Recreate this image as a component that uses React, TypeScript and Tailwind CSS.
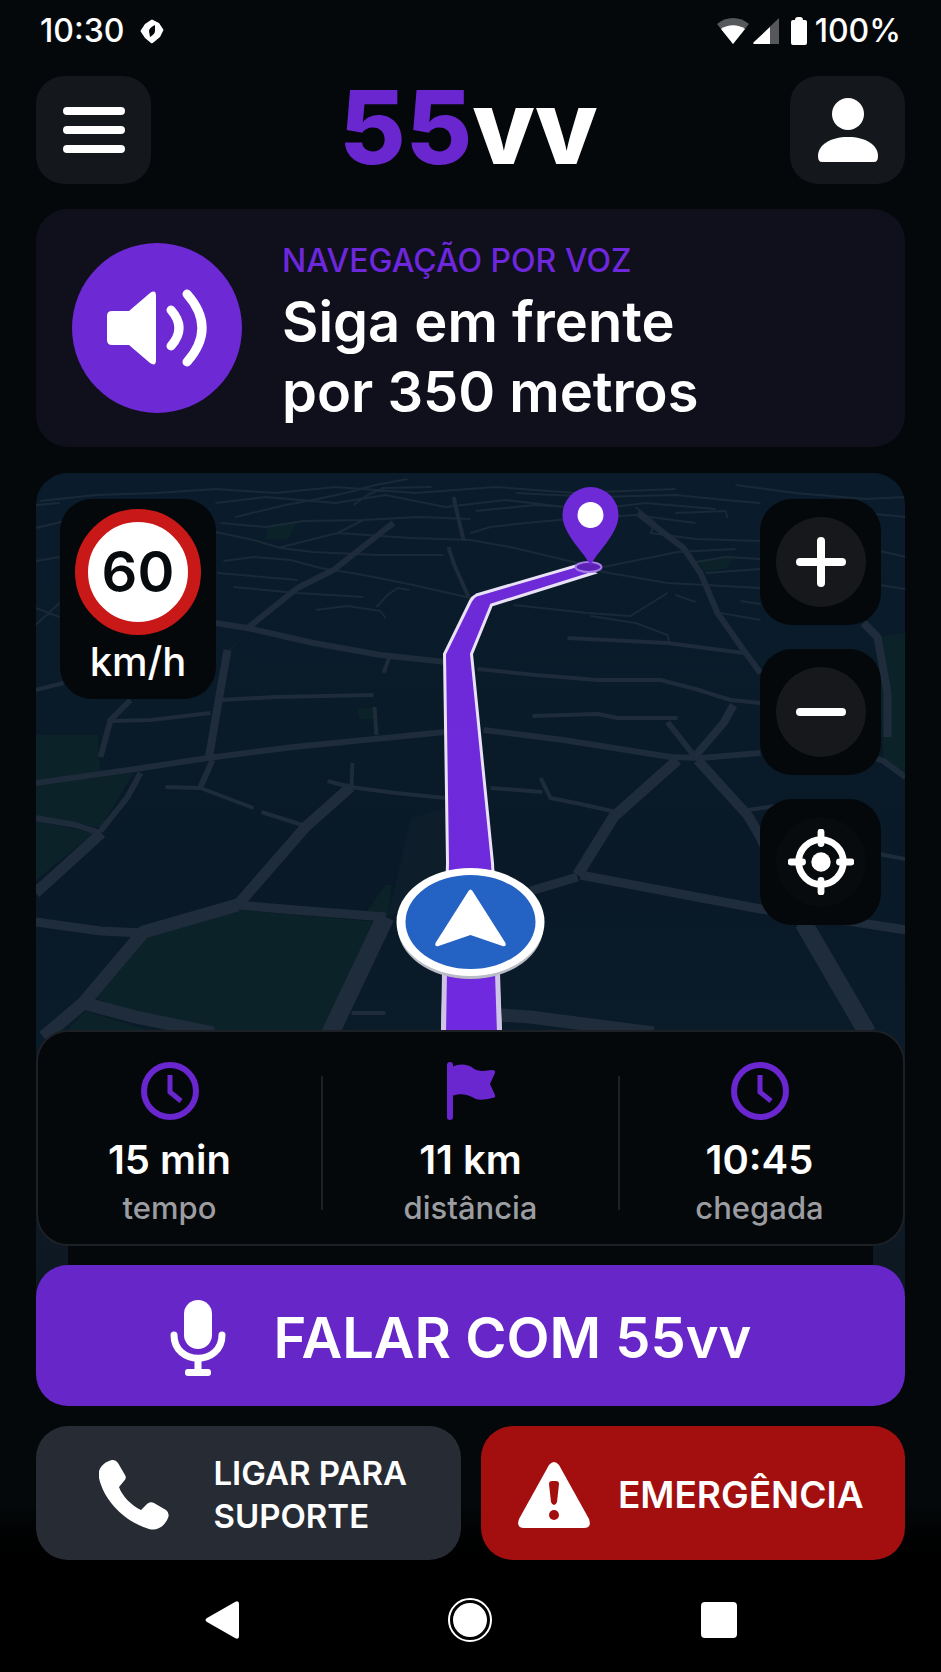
import clsx from 'clsx';
import React from 'react';

type IconProps = { className?: string };

const SolarIcon = ({ className }: IconProps) => (
  <svg viewBox="0 0 24 26" className={className} aria-hidden="true">
    <path d="M11 2 5 6 1 12Q0 13 1 14L5 20 11 25Q12 26 14 24L20 19 23 13Q24 12 23 11L19 5 13 2Q12 1 11 2Z" fill="#fff" />
    <path d="M15 7Q9 10 9 13L10 19Q15 16 15 13Z" fill="#04080a" />
  </svg>
);

const WifiIcon = ({ className }: IconProps) => (
  <svg viewBox="0 0 32 26" className={className} aria-hidden="true">
    <path d="M0 6C9-2 23-2 32 6L16 26Z" fill="#56585b" />
    <path d="M4 11C11 6 21 6 28 11L16 26Z" fill="#fff" />
  </svg>
);

const SignalIcon = ({ className }: IconProps) => (
  <svg viewBox="0 0 26 26" className={className} aria-hidden="true">
    <path d="M26 0V26H2C0 26 0 25 1 24Z" fill="#56585b" />
    <path d="M17 9V26H2C0 26 0 25 1 24Z" fill="#fff" />
  </svg>
);

const BatteryIcon = ({ className }: IconProps) => (
  <svg viewBox="0 0 16 28" className={className} aria-hidden="true">
    <path d="M4 3Q4 0 7 0H9Q12 0 12 3H14Q16 3 16 5V26Q16 28 14 28H2Q0 28 0 26V5Q0 3 2 3Z" fill="#fff" />
  </svg>
);

const MenuIcon = ({ className }: IconProps) => (
  <svg viewBox="0 0 62 46" className={className} aria-hidden="true">
    <path d="M4 4H58M4 23H58M4 42H58" stroke="#fff" strokeWidth="8" strokeLinecap="round" />
  </svg>
);

const UserIcon = ({ className }: IconProps) => (
  <svg viewBox="0 0 60 64" className={className} fill="#fff" aria-hidden="true">
    <circle cx="30" cy="16" r="16" />
    <path d="M0 58C0 47 12 39 30 39S60 47 60 58Q60 64 56 64H4Q0 64 0 58Z" />
  </svg>
);

const SpeakerIcon = ({ className }: IconProps) => (
  <svg viewBox="0 0 100 80" className={className} aria-hidden="true">
    <path d="M5 23H22L43 5Q49 1 49 8V72Q49 79 43 75L22 57H5Q0 57 0 52V28Q0 23 5 23Z" fill="#fff" />
    <path d="M64 22Q80 40 64 58M80 6Q110 40 80 74" fill="none" stroke="#fff" strokeWidth="9" strokeLinecap="round" />
  </svg>
);

const TargetIcon = ({ className }: IconProps) => (
  <svg viewBox="0 0 68 68" className={className} aria-hidden="true">
    <circle cx="34" cy="34" r="23" fill="none" stroke="#fff" strokeWidth="7" />
    <circle cx="34" cy="34" r="10" fill="#fff" />
    <path d="M34 3V15M34 53V65M3 34H15M53 34H65" stroke="#fff" strokeWidth="7" strokeLinecap="round" />
  </svg>
);

const PlusIcon = ({ className }: IconProps) => (
  <svg viewBox="0 0 50 50" className={className} aria-hidden="true">
    <path d="M4 25H46M25 4V46" stroke="#fff" strokeWidth="8" strokeLinecap="round" />
  </svg>
);

const MinusIcon = ({ className }: IconProps) => (
  <svg viewBox="0 0 50 50" className={className} aria-hidden="true">
    <path d="M4 25H46" stroke="#fff" strokeWidth="8" strokeLinecap="round" />
  </svg>
);

const ClockIcon = ({ className }: IconProps) => (
  <svg viewBox="0 0 58 58" className={className} fill="none" stroke="#6a26cf" aria-hidden="true">
    <circle cx="29" cy="29" r="26" strokeWidth="6" />
    <path d="M29 13V30L40 39" strokeWidth="5" />
  </svg>
);

const FlagIcon = ({ className }: IconProps) => (
  <svg viewBox="0 0 58 58" className={className} fill="#6a26cf" aria-hidden="true">
    <path d="M5 3Q5 0 8 0T11 3V55Q11 58 8 58T5 55Z" />
    <path d="M10 5C17 1 26 2 31 6C36 10 43 9 50 8Q54 8 53 11L48 22L53 33Q54 36 50 36C42 38 36 39 30 35C25 32 17 31 10 34Z" />
  </svg>
);

const MicIcon = ({ className }: IconProps) => (
  <svg viewBox="0 0 56 76" className={className} aria-hidden="true">
    <rect x="14" y="0" width="28" height="49" rx="14" fill="#fff" />
    <path d="M4 35C4 66 52 66 52 35" fill="none" stroke="#fff" strokeWidth="7" strokeLinecap="round" />
    <path d="M28 57V70" stroke="#fff" strokeWidth="7" />
    <rect x="15" y="69" width="26" height="7" rx="3" fill="#fff" />
  </svg>
);

const PhoneIcon = ({ className }: IconProps) => (
  <svg viewBox="0 0 70 70" className={className} aria-hidden="true">
    <path d="M2 7C6 2 11 0 14 0Q17 0 19 3L26 15Q28 18 25 21L20 27C23 36 33 46 42 50L48 44Q51 41 55 43L67 50Q71 53 69 58C65 67 58 71 50 69C24 61 5 40 0 18C-1 13 0 10 2 7Z" fill="#fff" />
  </svg>
);

const AlertIcon = ({ className }: IconProps) => (
  <svg viewBox="0 0 72 66" className={className} aria-hidden="true">
    <path d="M31 3Q36-3 41 3L71 57Q74 66 66 66H6Q-2 66 1 57Z" fill="#fff" />
    <path d="M31 22Q31 19 34 19H38Q41 19 41 22L39 40Q38 43 36 43T33 40Z" fill="#a30f0f" />
    <circle cx="36" cy="53" r="5" fill="#a30f0f" />
  </svg>
);

// Street segments grouped by how close they are to the camera
const farRoads = [
  'M4 28 60 22 120 20 180 16 240 20 300 14 380 20 460 14 540 20 640 16',
  'M180 30 230 24 300 30 350 22 410 34 470 27 530 34',
  'M200 44 250 32 282 26 310 20 340 12 372 6',
  'M318 32 332 22 348 15 396 14',
  'M180 59 218 67 245 75 278 79 342 82 408 82',
  'M185 50 230 54 268 48 328 47',
  'M242 75 302 60 328 47 382 44 435 46',
  'M302 60 375 65 435 67',
  'M188 88 218 84 255 87 285 95 328 102 378 112 435 125',
  'M182 100 262 107',
  'M198 114 262 120 328 124',
  'M280 137 312 133 345 138 350 145M341 134 352 122 362 115 374 117',
  'M435 67 475 74 542 90 568 99 632 110 725 115',
  'M568 94 642 79 700 76',
  'M435 60 455 54 490 50 535 46 600 42 660 50',
  'M440 38 500 32 560 36 610 30 680 36',
  'M480 20 560 24 640 22 700 28 725 30',
  'M640 40 690 38 692 45M600 34 620 50 615 60 660 66 725 68',
  'M655 90 690 84 725 86M670 100 725 96',
  'M478 132 552 140 595 143 632 120M640 122 660 129',
  'M555 143 600 150 632 162 634 170',
  'M685 140 725 147M705 128 725 131',
  'M832 75 870 84M832 110 870 116M830 40 870 44',
  'M0 32 24 30M0 88 24 84M0 55 30 48M0 135 24 144M0 152 24 130',
  'M700 12 760 20 830 26 870 24',
];

const midRoads = [
  'M0 217 28 210',
  'M75 248 115 247 175 240',
  'M185 227 240 224 338 222',
  'M339 234 341 262',
  'M348 200 354 184',
  'M532 165 632 170 708 180',
  'M442 196 500 202 562 207 625 207 660 216 695 227 725 230',
  'M497 243 562 241 582 245 642 245',
  'M455 315 507 319M505 305 515 325 545 331 585 340',
  'M712 337 740 333',
  'M130 314 165 315 218 335M226 339 270 353',
  'M292 308 315 314 360 320 410 325M317 290 316 314',
  'M418 24 428 67M413 74 418 90 433 124',
  'M828 375 848 382 870 386',
  'M316 540 350 540',
];

const nearRoads = [
  'M180 150 212 155 278 170 345 182 410 189',
  'M212 155 262 115 298 97 345 60 358 50',
  'M95 227 75 247 65 284',
  'M0 310 100 296 172 285 258 274 410 259',
  'M602 40 648 75 665 100 682 140 708 177 725 200',
  'M448 257 528 267 635 284 665 285 725 280',
  'M632 249 658 282',
  'M105 300 92 324 65 358',
  'M177 287 165 314',
  'M0 345 40 352 65 360',
  'M825 280 848 288 870 304',
];

const greens = [
  '205,437 343,449 288,560 150,560 60,525 115,460',
  '50,538 122,560 0,560 33,556',
  '0,312 98,300 65,355 0,343',
  '0,348 58,360 0,408',
  '0,262 62,262 65,298 0,308',
  '842,164 870,160 870,300 848,285',
  '330,440 352,444 356,412 350,412',
  '322,236 338,234 340,246 324,246',
  '190,178 212,160 200,172 192,182',
  '664,88 700,84 690,96 668,98',
  '232,54 262,48 252,66 230,66',
];

const MapArt = () => (
  <svg
    viewBox="0 0 870 820"
    preserveAspectRatio="xMidYMin slice"
    className="absolute inset-x-0 top-0 h-[820px] w-full rounded-t-[32px]"
    aria-hidden="true"
  >
    <defs>
      <linearGradient id="ground" x1="0" y1="0" x2="0" y2="1">
        <stop offset="0" stopColor="#0a1c2b" />
        <stop offset="0.5" stopColor="#091928" />
        <stop offset="0.7" stopColor="#0a1b29" />
        <stop offset="1" stopColor="#0e1822" />
      </linearGradient>
      <linearGradient id="route" x1="0" y1="0" x2="0" y2="1">
        <stop offset="0" stopColor="#6d2ad6" />
        <stop offset="1" stopColor="#7029e0" />
      </linearGradient>
    </defs>
    <rect width="870" height="820" fill="url(#ground)" />
    {greens.map((points) => (
      <polygon key={points} points={points} fill="#0b2228" />
    ))}
    <path d="M410 335 376 345 352 444 410 420Z" fill="#0d1e2a" />
    <g fill="none" stroke="#1d2b3a" strokeLinejoin="round">
      <path d={farRoads.join('')} strokeWidth="2" opacity="0.85" />
      <path d={midRoads.join('')} strokeWidth="4" />
      <path d={nearRoads.join('')} strokeWidth="6" />
    </g>
    <g fill="none" stroke="#1f2c3c" strokeLinejoin="round">
      <path d="M192 177 182 234 173 287" strokeWidth="8" />
      <path d="M828 150 842 164 852 220 852 264M698 232 688 250 658 285" strokeWidth="8" />
      <path d="M542 404 495 418M545 402 640 420 725 436 800 446 870 457" strokeWidth="9" />
      <path d="M0 449 65 458 108 460M202 432 260 437 350 444" strokeWidth="9" />
      <path d="M315 314 270 354 202 432M66 360 0 420M642 287 578 344 542 402" strokeWidth="11" />
      <path d="M662 287 712 342 725 364 768 454" strokeWidth="10" />
      <path d="M202 432 108 459 48 530 8 564M48 530 100 544 178 560M465 542 495 544 618 560" strokeWidth="13" />
      <path d="M768 450 832 560M350 444 293 564" strokeWidth="18" />
    </g>

    <path
      d="M407 560 412 390 409 181 435 128Q437 124 441 122L540 93 558 100 456 132 436 181 457 390 465 560Z"
      fill="url(#route)"
      stroke="#e9e2f7"
      strokeWidth="3"
    />
    <path d="M409 500 408 560M462 500 464 560" stroke="#cfc3e6" strokeWidth="5" />
    <ellipse cx="553" cy="94" rx="13" ry="5" fill="#5b22b4" stroke="#a77bea" strokeWidth="2" />
    <path d="M555 93C550 80 527 62 527 42A28 28 0 0 1 583 42C583 62 560 80 555 93Z" fill="#6d2ad6" />
    <circle cx="555" cy="42" r="13" fill="#fff" />

    <ellipse cx="435" cy="453" rx="73" ry="53" fill="#b9bcc4" />
    <ellipse cx="435" cy="449" rx="74" ry="54" fill="#fff" />
    <ellipse cx="435" cy="449" rx="65" ry="47" fill="#2462c4" />
    <path d="M433 418Q435 415 437 418L470 470Q471 474 467 473L435 462 403 473Q399 474 400 470Z" fill="#fff" />
  </svg>
);

type MapButtonProps = {
  label: string;
  dim?: boolean;
  children: React.ReactNode;
};

const MapButton = ({ label, dim, children }: MapButtonProps) => (
  <button
    aria-label={label}
    className="flex h-[126px] w-[121px] items-center justify-center rounded-[32px] bg-[#04080a]"
  >
    <span
      className={clsx(
        'flex h-[90px] w-[90px] items-center justify-center rounded-full',
        dim ? 'bg-[#080b0e]' : 'bg-[#16181c]',
      )}
    >
      {children}
    </span>
  </button>
);

type StatProps = {
  icon: React.ReactNode;
  value: string;
  label: string;
  className?: string;
};

const Stat = ({ icon, value, label, className }: StatProps) => (
  <div className={clsx('flex flex-col items-center', className)}>
    {icon}
    <p className="mt-4 text-[40px] leading-12 font-semibold">{value}</p>
    <p className="text-[31px] leading-12 font-medium text-[#9c9da1]">{label}</p>
  </div>
);

const Divider = () => <div className="mt-3.5 h-[134px] bg-[#1d2024]" />;

const App = () => {
  return (
    <div className="flex min-h-screen flex-col bg-linear-to-b from-[#04080a] from-90% to-black to-95% font-['Inter',sans-serif] text-white">
      <header className="px-9">
        <div className="flex h-[62px] items-center justify-between px-1 text-[32px] font-medium">
          <div className="flex items-center gap-4">
            <span>10:30</span>
            <SolarIcon className="h-[26px] w-6" />
          </div>
          <div className="flex items-center gap-1">
            <WifiIcon className="h-[26px] w-8" />
            <SignalIcon className="h-[26px] w-[26px]" />
            <BatteryIcon className="ml-2 h-7 w-4" />
            <span className="ml-1">100%</span>
          </div>
        </div>

        <div className="mt-3.5 flex items-center justify-between">
          <button
            aria-label="Menu"
            className="flex h-[108px] w-[115px] items-center justify-center rounded-[28px] bg-[#14171c]"
          >
            <MenuIcon className="h-[46px] w-[62px]" />
          </button>
          <h1 className="pr-1 pb-1.5 text-[102px] leading-[100px] font-extrabold">
            <span className="text-[#6a26cf]">55</span>vv
          </h1>
          <button
            aria-label="Perfil"
            className="flex h-[108px] w-[115px] items-center justify-center rounded-[28px] bg-[#14171c]"
          >
            <UserIcon className="h-16 w-[60px]" />
          </button>
        </div>
      </header>

      <main className="flex flex-col px-9 pt-[25px]">
        <section className="flex items-start gap-10 rounded-[32px] bg-[#100f1c] px-9 pt-[34px] pb-5">
          <div className="flex h-[170px] w-[170px] shrink-0 items-center justify-center rounded-full bg-[#6c29d4]">
            <SpeakerIcon className="h-20 w-[100px]" />
          </div>
          <div>
            <p className="text-[32px] leading-9 font-medium text-[#6d27dc]">NAVEGAÇÃO POR VOZ</p>
            <p className="mt-2 text-[56px] leading-[70px] font-semibold">
              Siga em frente
              <br />
              por 350 metros
            </p>
          </div>
        </section>

        <section className="relative mt-[26px]">
          <MapArt />
          <div className="relative flex h-[557px] items-start justify-between px-6 pt-[26px]">
            <div className="flex h-[200px] w-[156px] flex-col items-center rounded-[32px] bg-[#04080a] pt-2.5">
              <div className="flex h-[126px] w-[126px] items-center justify-center rounded-full border-[13px] border-[#c81818] bg-white text-[56px] font-semibold text-[#080b0e]">
                60
              </div>
              <p className="text-[40px] leading-[54px] font-medium">km/h</p>
            </div>
            <div className="flex flex-col gap-6">
              <MapButton label="Aumentar zoom">
                <PlusIcon className="h-[50px] w-[50px]" />
              </MapButton>
              <MapButton label="Diminuir zoom">
                <MinusIcon className="h-[50px] w-[50px]" />
              </MapButton>
              <MapButton label="Centralizar" dim>
                <TargetIcon className="h-[66px] w-[66px]" />
              </MapButton>
            </div>
          </div>

          <div className="relative grid grid-cols-[283fr_2px_295fr_2px_283fr] rounded-[32px] border-2 border-[#1d2024] bg-[#04080a] pt-[30px] pb-3">
            <Stat icon={<ClockIcon className="h-[58px] w-[58px]" />} value="15 min" label="tempo" className="pr-5" />
            <Divider />
            <Stat icon={<FlagIcon className="h-[58px] w-[58px]" />} value="11 km" label="distância" />
            <Divider />
            <Stat icon={<ClockIcon className="h-[58px] w-[58px]" />} value="10:45" label="chegada" className="pr-1" />
          </div>

          <div className="relative mx-8 h-[19px] bg-[#04080a]" />

          <button className="relative flex h-[141px] w-full items-center justify-center gap-12 rounded-[32px] bg-[#6727c8] pt-1 pr-5 text-[56px] font-semibold">
            <MicIcon className="h-[76px] w-14" />
            FALAR COM 55vv
          </button>
        </section>

        <div className="mt-5 grid grid-cols-2 gap-5">
          <button className="flex h-[134px] items-center justify-center gap-11 rounded-[32px] bg-[#272b34] pt-1 pl-2.5 text-left text-[33px] leading-[43px] font-semibold">
            <PhoneIcon className="h-[70px] w-[70px]" />
            <span>
              LIGAR PARA
              <br />
              SUPORTE
            </span>
          </button>
          <button className="flex h-[134px] items-center justify-center gap-7 rounded-[32px] bg-[#a30f0f] pt-1 pr-1 text-[37px] font-semibold">
            <AlertIcon className="h-[66px] w-[72px]" />
            EMERGÊNCIA
          </button>
        </div>
      </main>

      <nav className="grid grid-cols-3 items-center justify-items-center px-[98px] pt-[38px] pb-[30px]">
        <button aria-label="Voltar">
          <svg viewBox="0 0 34 38" className="h-[38px] w-[34px]" aria-hidden="true">
            <path d="M2 17 30 1Q34-1 34 3V35Q34 39 30 37L2 21Q-1 19 2 17Z" fill="#fff" />
          </svg>
        </button>
        <button aria-label="Início">
          <svg viewBox="0 0 44 44" className="h-11 w-11" aria-hidden="true">
            <circle cx="22" cy="22" r="21" fill="none" stroke="#fff" strokeWidth="2" />
            <circle cx="22" cy="22" r="17" fill="#fff" />
          </svg>
        </button>
        <button aria-label="Recentes" className="h-9 w-9 rounded-sm bg-white" />
      </nav>
    </div>
  );
};

export default App;
